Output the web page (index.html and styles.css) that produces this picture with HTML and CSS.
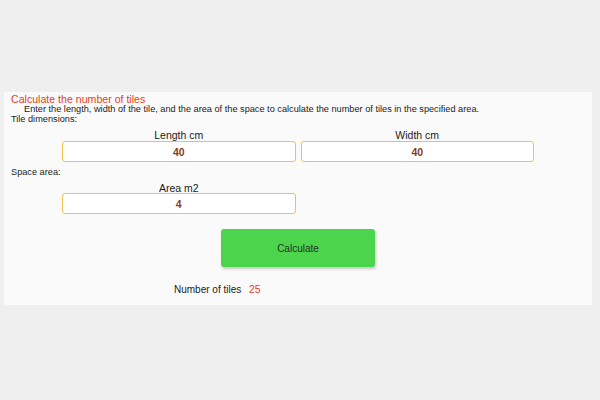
FILE: index.html
```html
<!DOCTYPE html>
<html lang="en">

<head>
  <meta charset="utf-8">
  <title>Tiles calculator</title>
  <link rel="stylesheet" href="styles.css">
</head>

<body>
  <div class="card">
    <!-- title and hint -->
    <div class="title">Calculate the number of tiles</div>
    <div class="hint">Enter the length, width of the tile, and the area of the space to calculate the number of tiles in the specified area.</div>

    <div class="section">Tile dimensions:</div>
    <div class="fields">
      <div class="field">
        <label for="len">Length cm</label>
        <input class="box" id="len" type="text" value="40">
      </div>
      <div class="field">
        <label for="wid">Width cm</label>
        <input class="box" id="wid" type="text" value="40">
      </div>
    </div>

    <div class="section">Space area:</div>
    <div class="fields">
      <div class="field field-area">
        <label for="area">Area m2</label>
        <input class="box" id="area" type="text" value="4">
      </div>
    </div>

    <div class="actions">
      <button class="button" onclick="calc();">Calculate</button>
    </div>

    <div class="result">Number of tiles <span id="count">25</span></div>
  </div>

  <script>
    "use strict";
    // number of tiles = area / (length * width)
    function calc() {
      var l = parseFloat(document.getElementById("len").value);
      var w = parseFloat(document.getElementById("wid").value);
      var a = parseFloat(document.getElementById("area").value);
      if (isNaN(l) || isNaN(w) || isNaN(a) || l <= 0 || w <= 0) {
        return;
      }
      var n = Math.ceil(a * 10000 / (l * w));
      document.getElementById("count").innerHTML = n;
    }
  </script>
</body>

</html>
```

FILE: styles.css
```css
body {
  margin: 0;
  background-color: #efefef;
  font-family: "Comic Sans MS", "Liberation Sans", sans-serif;
  color: #1a1a1a;
}

.card {
  margin: 92px 8px 0 4px;
  height: 213px;
  box-sizing: border-box;
  padding: 2px 7px;
  background-color: #fafafa;
}

.title {
  font-size: 10.6px;
  line-height: 10px;
  color: #e8401c;
}

.hint {
  font-size: 9.2px;
  line-height: 10px;
  text-indent: 13px;
}

.section {
  font-size: 9.2px;
  line-height: 10px;
}

.fields {
  width: 472px;
  margin: 6px auto 5px;
  display: grid;
  grid-template-columns: 1fr 1fr;
  gap: 5px;
}

.field {
  display: flex;
  flex-direction: column;
  align-items: center;
}

.field label {
  font-size: 10.5px;
  line-height: 10px;
  margin-bottom: 1px;
}

.field-area label {
  margin-bottom: 0;
}

.box {
  width: 100%;
  height: 21px;
  box-sizing: border-box;
  border: 1px solid #f3bf4f;
  border-radius: 3px;
  background-color: #fff;
  text-align: center;
  font-family: inherit;
  font-size: 10.5px;
  font-weight: bold;
  color: #8a3b17;
  outline: none;
}

.actions {
  margin-top: 15px;
  display: flex;
  justify-content: center;
}

.button {
  width: 154px;
  height: 38px;
  border: none;
  border-radius: 3px;
  background-color: #4cd44c;
  box-shadow: 1px 2px 3px rgba(0, 0, 0, 0.2);
  font-family: inherit;
  font-size: 10px;
  color: #243324;
  cursor: pointer;
}

.result {
  margin: 17px 0 0 163px;
  font-size: 10px;
  line-height: 10px;
}

.result span {
  margin-left: 5px;
  font-size: 10.5px;
  color: #e8401c;
}
```
